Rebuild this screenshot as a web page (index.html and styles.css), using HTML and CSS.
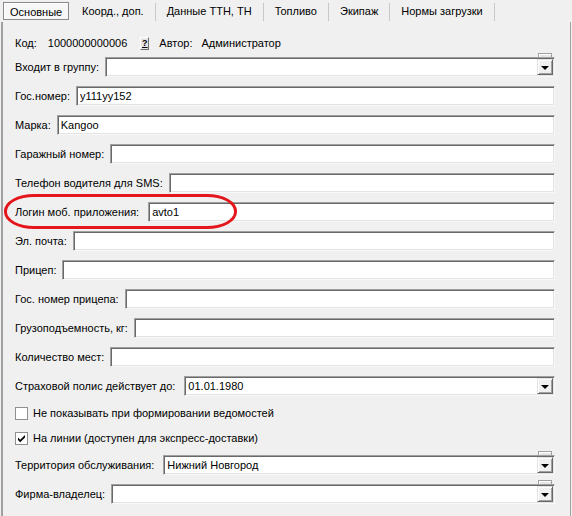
FILE: index.html
```html
<!DOCTYPE html>
<html lang="ru">
<head>
<meta charset="utf-8">
<title>Основные</title>
<link rel="stylesheet" href="styles.css">
</head>
<body>
<div class="window">
  <div class="tabs">
    <div class="tab active">Основные</div>
    <div class="tab">Коорд., доп.</div>
    <div class="tab">Данные ТТН, ТН</div>
    <div class="tab">Топливо</div>
    <div class="tab">Экипаж</div>
    <div class="tab">Нормы загрузки</div>
  </div>
  <div class="panel">
    <div class="form">
      <div class="row code-row">
        <span class="lbl">Код:</span>
        <span class="code-val">1000000000006</span>
        <span class="qbtn">?</span>
        <span class="lbl">Автор:</span>
        <span class="author">Администратор</span>
      </div>
      <div class="row">
        <span class="lbl">Входит в группу:</span>
        <div class="field combo bumped"><span class="val"></span><span class="drop"></span><span class="bump"></span></div>
      </div>
      <div class="row">
        <span class="lbl">Гос.номер:</span>
        <div class="field"><span class="val">у111уу152</span></div>
      </div>
      <div class="row">
        <span class="lbl">Марка:</span>
        <div class="field"><span class="val">Kangoo</span></div>
      </div>
      <div class="row">
        <span class="lbl">Гаражный номер:</span>
        <div class="field"><span class="val"></span></div>
      </div>
      <div class="row">
        <span class="lbl">Телефон водителя для SMS:</span>
        <div class="field"><span class="val"></span></div>
      </div>
      <div class="row">
        <span class="lbl">Логин моб. приложения:</span>
        <div class="field wide-gap"><span class="val">avto1</span></div>
      </div>
      <div class="row">
        <span class="lbl">Эл. почта:</span>
        <div class="field"><span class="val"></span></div>
      </div>
      <div class="row">
        <span class="lbl">Прицеп:</span>
        <div class="field"><span class="val"></span></div>
      </div>
      <div class="row">
        <span class="lbl">Гос. номер прицепа:</span>
        <div class="field"><span class="val"></span></div>
      </div>
      <div class="row">
        <span class="lbl">Грузоподъемность, кг:</span>
        <div class="field"><span class="val"></span></div>
      </div>
      <div class="row">
        <span class="lbl">Количество мест:</span>
        <div class="field"><span class="val"></span></div>
      </div>
      <div class="row">
        <span class="lbl">Страховой полис действует до:</span>
        <div class="field combo wide-gap"><span class="val">01.01.1980</span><span class="drop"></span></div>
      </div>
      <div class="row check-row">
        <span class="box"></span>
        <span class="lbl">Не показывать при формировании ведомостей</span>
      </div>
      <div class="row check-row">
        <span class="box"><svg width="9" height="9" viewBox="0 0 9 9"><path d="M1 3.5 L3.2 5.7 L8 1 L8 3.4 L3.2 8.2 L1 6 Z" fill="#000"/></svg></span>
        <span class="lbl">На линии (доступен для экспресс-доставки)</span>
      </div>
      <div class="row">
        <span class="lbl">Территория обслуживания:</span>
        <div class="field combo bumped wide-gap"><span class="val">Нижний Новгород</span><span class="drop"></span><span class="bump"></span></div>
      </div>
      <div class="row">
        <span class="lbl">Фирма-владелец:</span>
        <div class="field combo bumped"><span class="val"></span><span class="drop"></span><span class="bump"></span></div>
      </div>
    </div>
    <div class="highlight"></div>
  </div>
</div>
</body>
</html>
```
FILE: styles.css
```css
html, body {
  margin: 0;
  padding: 0;
}
body {
  width: 572px;
  height: 516px;
  background: #f0f0f0;
  font-family: "Liberation Sans", Arial, sans-serif;
  font-size: 11px;
  color: #000;
  overflow: hidden;
}
.window {
  width: 572px;
  height: 516px;
  display: flex;
  flex-direction: column;
}
.tabs {
  height: 22px;
  display: flex;
  align-items: flex-start;
  padding-left: 3px;
  box-sizing: border-box;
}
.tab {
  height: 18px;
  margin-top: 3px;
  line-height: 17px;
  padding: 0 11px;
  border-right: 1px solid #c8c8c8;
  white-space: nowrap;
}
.tab.active {
  margin-top: 2px;
  height: 18px;
  line-height: 18px;
  padding: 0 6px;
  border: 1px solid #8a8a8a;
  background: #f7f7f7;
  box-shadow: inset 1px 1px 0 #fff;
  margin-right: 2px;
  box-sizing: border-box;
  width: 66px;
}
.panel {
  position: relative;
  flex: 1;
  margin-left: 1px;
  border-left: 2px solid #a0a0a0;
  border-right: 1px solid #a0a0a0;
  padding: 11px 15px 0 12px;
  box-sizing: border-box;
  width: 570px;
}
.form {
  display: flex;
  flex-direction: column;
  gap: 9px;
}
.row {
  display: flex;
  align-items: center;
  height: 20px;
}
.lbl {
  white-space: nowrap;
}
.row > .lbl + .field {
  margin-left: 6px;
}
.row > .lbl + .field.wide-gap {
  margin-left: 9px;
}
.code-row {
  margin-bottom: -5px;
}
.code-val {
  margin-left: 11px;
}
.qbtn {
  margin: 0 10px 0 13px;
  width: 7px;
  height: 11px;
  font-size: 9px;
  line-height: 11px;
  text-align: center;
  font-weight: bold;
  text-decoration: underline;
  background: #e6e6e6;
  border-left: 1px solid #fff;
  border-top: 1px solid #fff;
  border-right: 1px solid #707070;
  border-bottom: 1px solid #707070;
}
.author {
  margin-left: 9px;
}
.field {
  position: relative;
  flex: 1;
  height: 20px;
  box-sizing: border-box;
  background: #fff;
  border: 1px solid;
  border-color: #a0a0a0 #f8f8f8 #f8f8f8 #a0a0a0;
  box-shadow: inset 1px 1px 0 #696969, inset -1px -1px 0 #e3e3e3;
  display: flex;
  align-items: center;
}
.val {
  flex: 1;
  padding-left: 3px;
  white-space: nowrap;
}
.drop {
  width: 16px;
  height: 16px;
  box-sizing: border-box;
  margin-right: 1px;
  background: #f0f0f0;
  border: 1px solid;
  border-color: #e3e3e3 #696969 #696969 #e3e3e3;
  box-shadow: inset 1px 1px 0 #fff, inset -1px -1px 0 #a0a0a0;
  display: flex;
  align-items: center;
  justify-content: center;
}
.drop::after {
  content: "";
  width: 0;
  height: 0;
  border-left: 4px solid transparent;
  border-right: 4px solid transparent;
  border-top: 4px solid #000;
  margin-top: 1px;
}
.bump {
  position: absolute;
  right: 2px;
  top: -5px;
  width: 14px;
  height: 4px;
  box-sizing: border-box;
  background: #e6e6e6;
  border: 1px solid #a0a0a0;
  border-bottom: none;
  box-shadow: inset 1px 1px 0 #fff;
}
.check-row {
  height: 16px;
}
.box {
  width: 13px;
  height: 13px;
  box-sizing: border-box;
  background: #fff;
  border: 1px solid #8e8f8f;
  margin-right: 5px;
  display: flex;
  align-items: center;
  justify-content: center;
}
.highlight {
  position: absolute;
  left: 1px;
  top: 172px;
  width: 233px;
  height: 35px;
  box-sizing: border-box;
  border: 3px solid #e4161c;
  border-radius: 30px / 17px;
}
```
